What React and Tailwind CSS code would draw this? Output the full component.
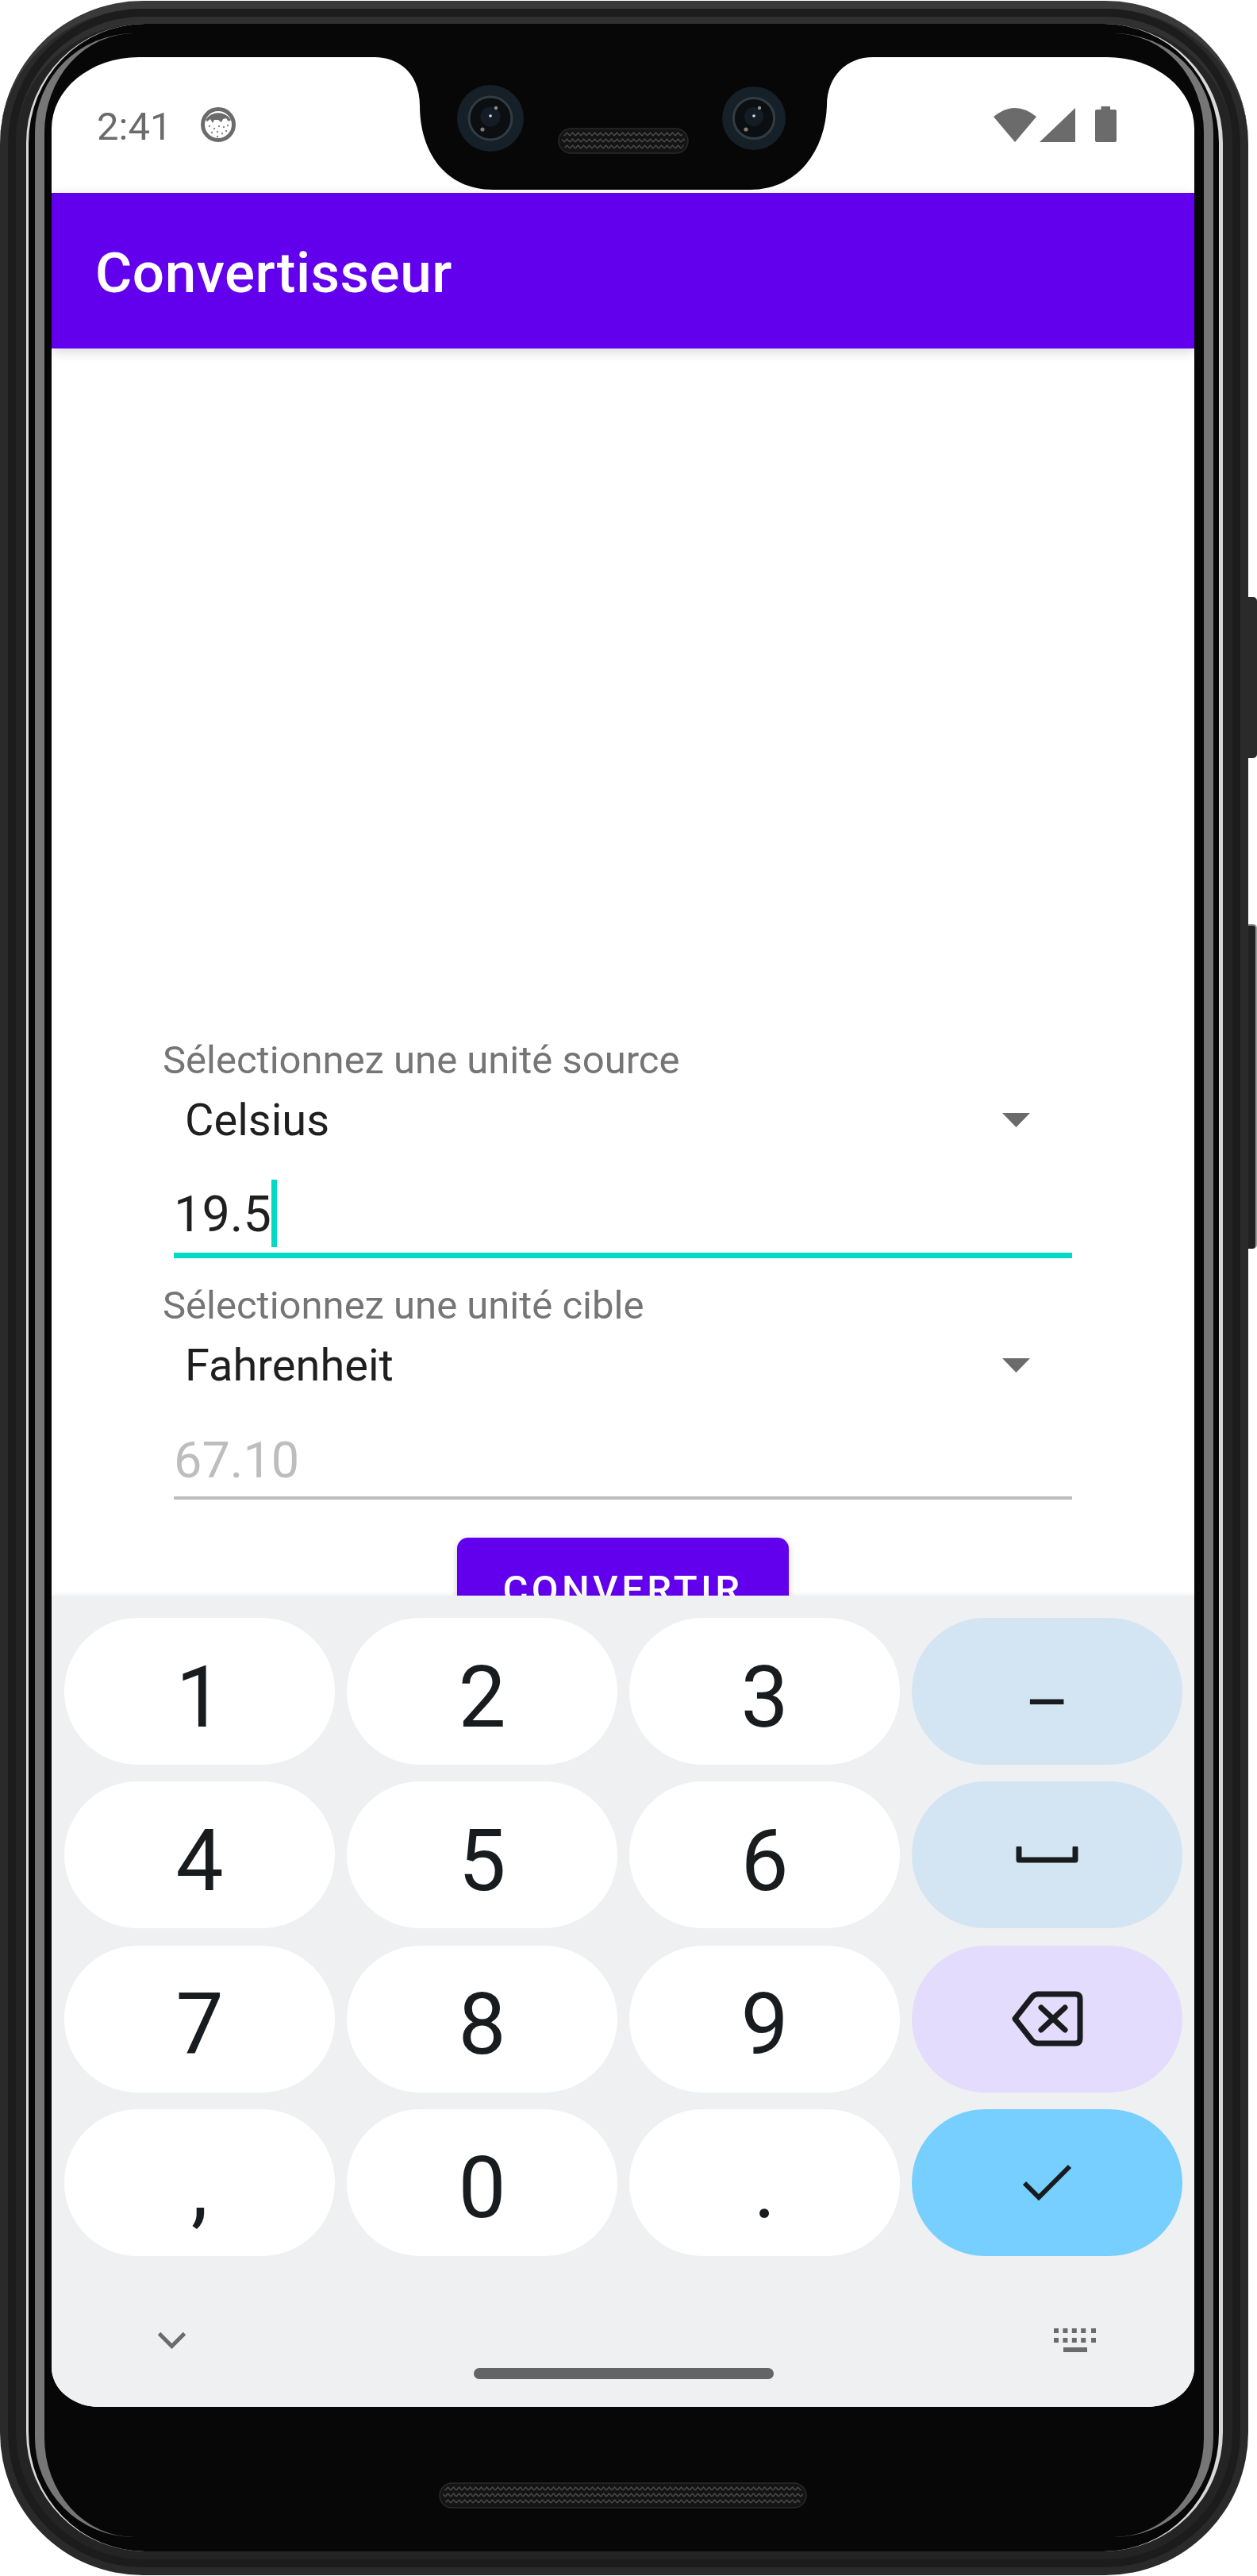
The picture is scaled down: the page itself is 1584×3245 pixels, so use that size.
import React from "react";

const keyBase = "flex h-[185px] items-center justify-center rounded-full text-[#191c1e]";

const SpeakerGrill = ({ id, x, y, w, h }) => (
  <>
    <defs>
      <pattern id={id} x={x} y={y + 3} width="7" height="8" patternUnits="userSpaceOnUse">
        <path d="M0 6 L3.5 2 L7 6" fill="none" stroke="#4c4c4c" strokeWidth="1.4" />
      </pattern>
    </defs>
    <rect x={x} y={y} width={w} height={h} rx={h / 2} fill="#141414" stroke="#2a2a2a" strokeWidth="1.5" />
    <rect x={x + 4} y={y + 3} width={w - 8} height={h - 6} rx={(h - 6) / 2} fill={`url(#${id})`} />
  </>
);

const Camera = ({ cx, cy, r }) => (
  <>
    <circle cx={cx} cy={cy} r={r} fill="#162028" />
    <circle cx={cx} cy={cy} r={r * 0.64} fill="#0c0f12" stroke="#333c42" strokeWidth="3" />
    <circle cx={cx} cy={cy - 2} r={r * 0.3} fill="#141d26" />
    <circle cx={cx} cy={cy - 3} r="1.8" fill="#d5dfe8" />
    <circle cx={cx + 7} cy={cy - 13} r="2.2" fill="#8f8f8f" />
    <circle cx={cx - 10} cy={cy + 14} r="2.6" fill="#85796f" />
  </>
);

const Notch = () => (
  <svg className="absolute left-[407px] top-0" width="628" height="168" viewBox="0 0 628 168">
    <path d="M0 0 C33 0 57 23 57 61 C57 118 88 167 150 167 H473 C533 167 568 118 570 61 C570 23 596 0 628 0 Z" fill="#070707" />
    <Camera cx={146} cy={77} r={42} />
    <Camera cx={478} cy={77} r={40} />
    <SpeakerGrill id="grill-top" x={232} y={90} w={163} h={31} />
  </svg>
);

const FaceIcon = () => (
  <svg width="44" height="44" viewBox="0 0 44 44">
    <circle cx="22" cy="22" r="19.5" fill="#fff" stroke="#6b6b6b" strokeWidth="5" />
    <path d="M6 16 A19 19 0 0 1 38 16 L35 18 L32 14 L28 15 L26 19 L22 16 L17 16 L15 20 L12 15 L8 18 Z" fill="#6b6b6b" />
    {[[11, 24], [17, 27], [23, 24], [29, 25], [34, 23], [14, 32], [21, 31], [27, 33], [32, 30], [21, 37]].map(([cx, cy]) => (
      <circle key={`${cx}-${cy}`} cx={cx} cy={cy} r="1.2" fill="#8a8a8a" />
    ))}
  </svg>
);

const SystemIcons = () => (
  <svg width="155" height="45" viewBox="0 0 155 45" fill="#6b6b6b">
    <path d="M0 13 Q27 -9 54 13 L27 45 Z" />
    <path d="M58 45 H103 V2 Z" />
    <path d="M135.5 0 H147 V4 H153 a2 2 0 0 1 2 2 V43 a2 2 0 0 1 -2 2 H130 a2 2 0 0 1 -2 -2 V6 a2 2 0 0 1 2 -2 H135.5 Z" />
  </svg>
);

const DropArrow = () => (
  <svg className="mt-[29px]" width="35" height="18" viewBox="0 0 35 18">
    <path d="M0 0 H35 L17.5 18 Z" fill="#6b6b6b" />
  </svg>
);

const SelectRow = ({ value }) => (
  <div className="ml-[168px] mr-[207px] mt-[8px] flex justify-between">
    <span className="text-[56px] leading-[76px] text-[#1f1f1f]">{value}</span>
    <DropArrow />
  </div>
);

const SpaceIcon = () => (
  <svg width="79" height="21" viewBox="0 0 79 21">
    <path d="M4 2 V17 H75 V2" fill="none" stroke="#191c1e" strokeWidth="7" strokeLinejoin="round" strokeLinecap="round" />
  </svg>
);

const BackspaceIcon = () => (
  <svg width="90" height="70" viewBox="0 0 90 70" fill="none" stroke="#191c1e" strokeWidth="7" strokeLinejoin="round" strokeLinecap="round">
    <path d="M4 35 L26 7 Q29 4 33 4 H80 Q86 4 86 10 V60 Q86 66 80 66 H33 Q29 66 26 63 Z" />
    <path d="M37 21 L67 49 M67 21 L37 49" />
  </svg>
);

const CheckIcon = () => (
  <svg width="62" height="47" viewBox="0 0 62 47">
    <path d="M2 24 L20 42 L59 3" fill="none" stroke="#191c1e" strokeWidth="6" />
  </svg>
);

const KeyboardIcon = () => (
  <svg width="53" height="30" viewBox="0 0 53 30" fill="#6b6b6b">
    {[0, 11.4, 22.8, 34.2, 47].map((x) => (
      <React.Fragment key={x}>
        <rect x={x} y="0" width="6" height="6" />
        <rect x={x} y="12" width="6" height="6" />
      </React.Fragment>
    ))}
    <rect x="12" y="24" width="30" height="6" />
  </svg>
);

const digit = "pt-[15px] text-[107px] leading-none";

const Keyboard = () => (
  <div className="z-20 flex h-[1022px] flex-col bg-[#eff0f2] pl-[16px] pr-[15px] pt-[28px] shadow-[0_-2px_6px_rgba(0,0,0,0.05)]">
    <div className="grid grid-cols-4 gap-x-[15px] gap-y-[21.33px]">
      <div className={`${keyBase} bg-white ${digit}`}>1</div>
      <div className={`${keyBase} bg-white ${digit}`}>2</div>
      <div className={`${keyBase} bg-white ${digit}`}>3</div>
      <div className={`${keyBase} bg-[#d3e4f3] pt-[30px] text-[87px] leading-none`}>–</div>
      <div className={`${keyBase} bg-white ${digit}`}>4</div>
      <div className={`${keyBase} bg-white ${digit}`}>5</div>
      <div className={`${keyBase} bg-white ${digit}`}>6</div>
      <div className={`${keyBase} bg-[#d3e4f3]`}><SpaceIcon /></div>
      <div className={`${keyBase} bg-white ${digit}`}>7</div>
      <div className={`${keyBase} bg-white ${digit}`}>8</div>
      <div className={`${keyBase} bg-white ${digit}`}>9</div>
      <div className={`${keyBase} bg-[#e4dcfd]`}><BackspaceIcon /></div>
      <div className={`${keyBase} bg-white ${digit}`}>,</div>
      <div className={`${keyBase} bg-white ${digit}`}>0</div>
      <div className={`${keyBase} bg-white ${digit}`}>.</div>
      <div className={`${keyBase} bg-[#76cfff]`}><CheckIcon /></div>
    </div>
    <div className="mt-[91px] flex items-start justify-between pl-[118px] pr-[109px]">
      <svg className="mt-[5px]" width="35" height="21" viewBox="0 0 35 21">
        <path d="M1.5 1.5 L17.5 17.5 L33.5 1.5" fill="none" stroke="#6b6b6b" strokeWidth="5" />
      </svg>
      <KeyboardIcon />
    </div>
    <div className="mx-auto mt-[20px] h-[14px] w-[378px] rounded-full bg-[#646464]" />
  </div>
);

const Screen = () => (
  <div className="relative flex h-[2960px] flex-col overflow-hidden rounded-bl-[60px_50px] rounded-br-[60px_50px] rounded-tl-[110px_90px] rounded-tr-[110px_90px] bg-white">
    <Notch />
    <div className="flex h-[171px] justify-between pl-[57px] pr-[98px] pt-[59px]">
      <div className="flex items-start gap-[37px]">
        <span className="text-[49px] leading-[57px] text-[#6b6b6b]">2:41</span>
        <div className="mt-[4px]"><FaceIcon /></div>
      </div>
      <div className="pt-[3px]"><SystemIcons /></div>
    </div>
    <div className="z-10 h-[196px] bg-[#6200ee] pl-[55px] pt-[60px] text-[71px] font-medium leading-[82px] tracking-[0.5px] text-white shadow-[0_4px_14px_rgba(0,0,0,0.16)]">
      Convertisseur
    </div>
    <div className="h-[1571px] overflow-hidden pt-[868px]">
      <div className="ml-[140px] text-[49px] leading-[58px] text-[#757575]">Sélectionnez une unité source</div>
      <SelectRow value="Celsius" />
      <div className="ml-[154px] mr-[154px] mt-[39px] flex items-start border-b-[7px] border-[#03dac5] pb-[6px] text-[63px] leading-[84px] text-[#1f1f1f]">
        <span>19.5</span>
        <span className="-mt-[2px] h-[85px] w-[7px] bg-[#03dac5]" />
      </div>
      <div className="ml-[140px] mt-[31px] text-[49px] leading-[58px] text-[#757575]">Sélectionnez une unité cible</div>
      <SelectRow value="Fahrenheit" />
      <div className="ml-[154px] mr-[154px] mt-[40px] border-b-[4px] border-[#bdbdbd] pb-[3px] text-[63px] leading-[84px] text-[#bdbdbd]">
        67.10
      </div>
      <div className="mx-auto mt-[48px] h-[140px] w-[418px] rounded-[14px] bg-[#6200ee] pt-[37px] text-center text-[49px] font-medium leading-[57px] tracking-[4.4px] text-white shadow-[0_3px_8px_rgba(0,0,0,0.2)]">
        CONVERTIR
      </div>
    </div>
    <Keyboard />
  </div>
);

const App = () => (
  <div className="flex h-[3245px] w-[1584px] bg-white font-[family-name:Roboto,sans-serif]">
    <div className="mt-px h-[3243px] w-[1573px] rounded-[180px] border-t-[10px] border-[#3a3a3a] bg-[#2a2a2a] px-[10px] pb-[10px]">
      <div className="h-full rounded-[170px] bg-[#1c1c1c] p-[10px]">
        <div className="h-full rounded-[160px] border-t-[9px] border-[#303030] bg-[#242424] pb-[10px] pl-[13px] pr-[12px]">
          <div className="h-full rounded-[150px] border-x-0 border-l-[3px] border-r-[5px] border-[#d8d8d8] bg-[#070707] pb-[18px] pl-[8px] pr-[7px] pt-[12px]">
            <div className="h-full rounded-[125px] border-x-[12px] border-[#767676] bg-[#070707] pl-[9px] pr-[12px] pt-[30px]">
              <Screen />
              <div className="flex justify-center pt-[95px]">
                <svg width="464" height="33" viewBox="0 0 464 33">
                  <SpeakerGrill id="grill-bottom" x={1} y={1} w={462} h={31} />
                </svg>
              </div>
            </div>
          </div>
        </div>
      </div>
    </div>
    <div className="flex flex-col gap-[209px] pt-[752px]">
      <div className="h-[203px] w-[11px] rounded-r-[5px] bg-[#2a2a2a]" />
      <div className="h-[409px] w-[11px] rounded-r-[5px] border-r-2 border-t-2 border-[#9a9a9a] bg-[#222222]" />
    </div>
  </div>
);

export default App;
